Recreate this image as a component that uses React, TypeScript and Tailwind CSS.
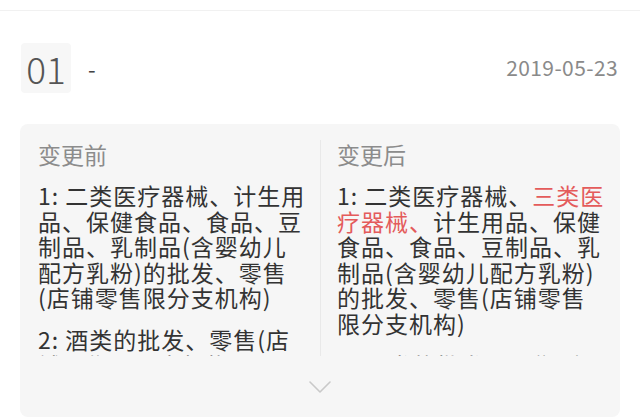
const font = '"Noto Sans CJK SC", "Noto Sans", sans-serif'

const beforeLines = [
  ['1: 二类医疗器械、计生用', '品、保健食品、食品、豆', '制品、乳制品(含婴幼儿', '配方乳粉)的批发、零售', '(店铺零售限分支机构)'],
  ['2: 酒类的批发、零售(店', '铺零售限分支机构)']
]

function ChevronDown() {
  return (
    <svg width="22" height="12" viewBox="0 0 22 12" fill="none">
      <path d="M1 1l10 10L21 1" stroke="#c9c9c9" strokeWidth="1.6" strokeLinecap="round" strokeLinejoin="round" />
    </svg>
  )
}

export default function App() {
  return (
    <div className="w-[640px] h-[420px] bg-white overflow-hidden" style={{ fontFamily: font }}>
      <div className="h-[11px] border-b border-[#f1f1f1]" />

      <div className="flex items-center h-[50px] mt-[32px] px-[21px]">
        <div className="w-[50px] h-[50px] rounded-[4px] bg-[#f7f7f7] flex items-center justify-center text-[37px] font-light text-[#555] leading-none">
          01
        </div>
        <div className="ml-[17px] text-[22px] text-[#444] leading-none">-</div>
        <div className="ml-auto mr-[1px] text-[21px] text-[#8a8a8a] tracking-[0.4px]">2019-05-23</div>
      </div>

      <div className="mx-[20px] mt-[31px] h-[293px] rounded-[8px] bg-[#f6f6f6] flex flex-col">
        <div className="grid grid-cols-2 mt-[14px] h-[218px] overflow-hidden">
          <div className="pl-[18px] pr-2">
            <div className="text-[23px] leading-[32px] text-[#8c8c8c]">变更前</div>
            <div className="mt-[13px] text-[23px] leading-[25.5px] tracking-[1px] text-[#333] whitespace-nowrap">
              {beforeLines.map((para, i) => (
                <div key={i} className={i > 0 ? 'mt-[16.5px]' : ''}>
                  {para.map((l) => (
                    <div key={l}>{l}</div>
                  ))}
                </div>
              ))}
            </div>
          </div>

          <div className="border-l border-[#e9e9e9] mt-[2px] pl-[16px] pr-2">
            <div className="-mt-[2px] text-[23px] leading-[32px] text-[#8c8c8c]">变更后</div>
            <div className="mt-[13px] text-[23px] leading-[25.5px] tracking-[1px] text-[#333] whitespace-nowrap">
              <div>
                <div>
                  1: 二类医疗器械、<span className="text-[#e45b5b]">三类医</span>
                </div>
                <div>
                  <span className="text-[#e45b5b]">疗器械、</span>计生用品、保健
                </div>
                <div>食品、食品、豆制品、乳</div>
                <div>制品(含婴幼儿配方乳粉)</div>
                <div>的批发、零售(店铺零售</div>
                <div>限分支机构)</div>
              </div>
              <div className="mt-[16.5px]">2: 酒类的批发、零售(店</div>
            </div>
          </div>
        </div>

        <div className="flex justify-center mt-[25px]">
          <ChevronDown />
        </div>
      </div>
    </div>
  )
}
